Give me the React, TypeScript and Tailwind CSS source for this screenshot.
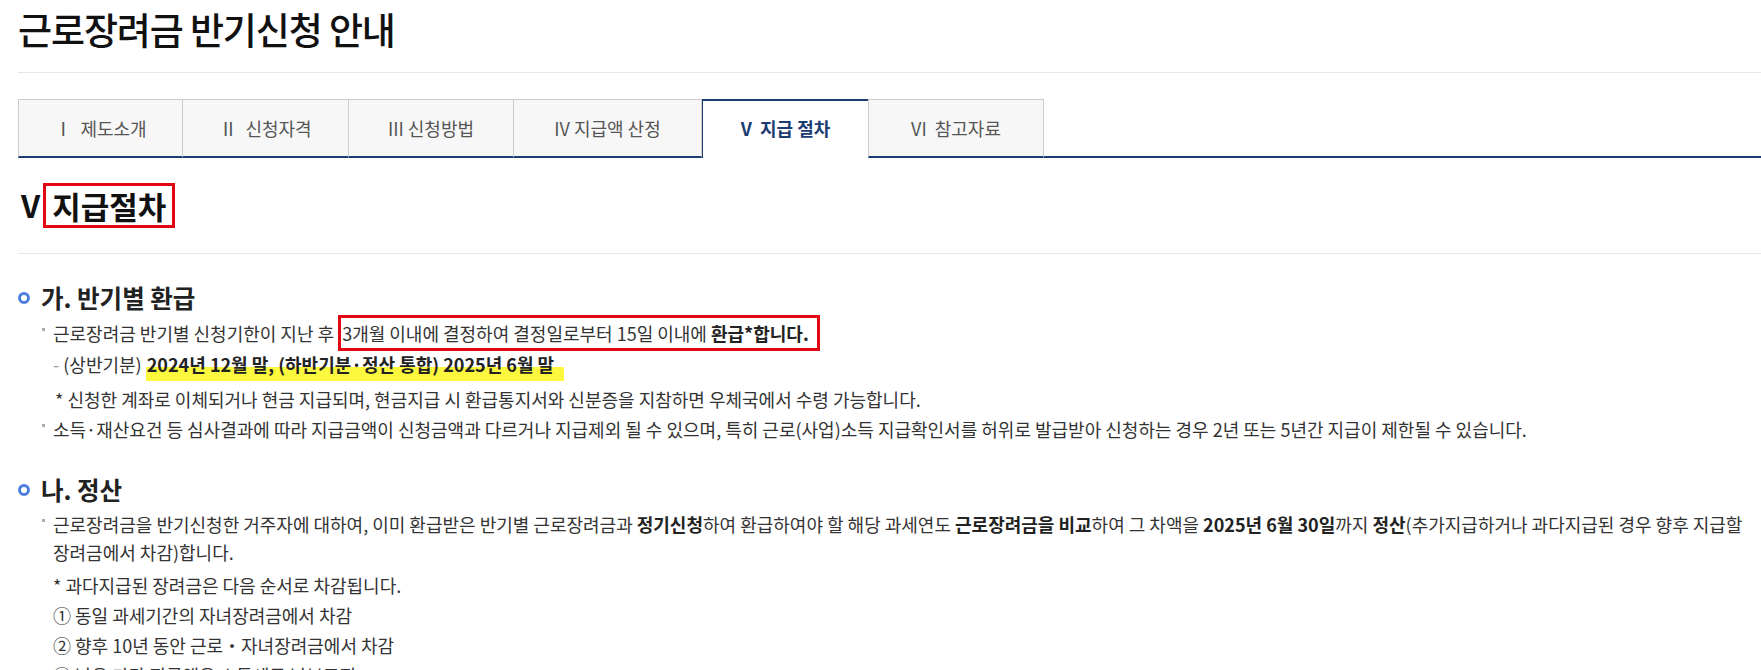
import React from "react";

const tabs = [
  { label: "Ⅰ  제도소개", width: "w-[165px]" },
  { label: "Ⅱ  신청자격", width: "w-[167px]" },
  { label: "III 신청방법", width: "w-[166px]" },
  { label: "IV 지급액 산정", width: "w-[189px]" },
  { label: "V  지급 절차", width: "w-[167px]", active: true },
  { label: "VI  참고자료", width: "w-[176px]" },
];

function Dot() {
  return <span className="mr-[8px] inline-block h-[3px] w-[3px] translate-y-[-7px] bg-[#aaa] align-middle" />;
}

function SectionTitle({ children }: Readonly<{ children: React.ReactNode }>) {
  return (
    <h3 className="flex items-center text-[24.5px] font-bold leading-[32px] text-[#222]">
      <span className="mr-[11px] inline-block h-[12px] w-[12px] rounded-full border-[3px] border-[#4a80dc]" />
      {children}
    </h3>
  );
}

export default function App() {
  return (
    <div className="min-h-screen overflow-hidden whitespace-nowrap bg-white pl-[18px] font-['Noto_Sans_CJK_KR','Noto_Sans',sans-serif] text-[#333]">
      <div className="h-[73px] border-b border-[#e6e6e6] pt-[7px]">
        <h1 className="text-[37px] font-medium leading-[44px] tracking-[-1.1px] text-[#111]">근로장려금 반기신청 안내</h1>
      </div>

      <nav className="mt-[26px] flex h-[59px]">
        {tabs.map((tab) =>
          tab.active ? (
            <div
              key={tab.label}
              className={`${tab.width} flex items-center justify-center whitespace-pre border-x border-t-2 border-[#1c3d72] bg-white pb-[2px] text-[18px] font-bold text-[#1c3d72]`}
            >
              {tab.label}
            </div>
          ) : (
            <div
              key={tab.label}
              className={`${tab.width} -ml-px flex items-center justify-center whitespace-pre border-x border-t border-[#cccccc] border-b-2 border-b-[#1c3d72] bg-[#f7f7f7] text-[18px] text-[#555] first:ml-0`}
            >
              {tab.label}
            </div>
          )
        )}
        <div className="flex-1 border-b-2 border-[#1c3d72]" />
      </nav>

      <div className="flex h-[96px] items-center border-b border-[#e6e6e6]">
        <h2 className="flex items-center text-[31px] font-bold text-[#111]">
          <span className="ml-[3px] mr-[3px]">V</span>
          <span className="border-[3px] border-[#e30613] px-[6px] leading-[39px]">지급절차</span>
        </h2>
      </div>

      <div className="mt-[28px]">
        <SectionTitle>가. 반기별 환급</SectionTitle>
        <div className="ml-[24px] mt-[4px] text-[18px] leading-[30px]">
          <p>
            <Dot />
            근로장려금 반기별 신청기한이 지난 후{" "}
            <span className="border-[3px] border-[#e30613] py-[2px] pl-[1px] pr-[8px]">
              3개월 이내에 결정하여 결정일로부터 15일 이내에 <b className="text-[#222]">환급*합니다.</b>
            </span>
          </p>
          <p className="mt-[1px] pl-[11px]">
            <span className="text-[#999]">-</span> (상반기분){" "}
            <b className="bg-[linear-gradient(transparent_52%,#fcf83e_52%)] pb-[4px] pl-[1px] pr-[10px] text-[#222]">
              2024년 12월 말, (하반기분·정산 통합) 2025년 6월 말
            </b>
          </p>
          <p className="mt-[5px] pl-[13px]">* 신청한 계좌로 이체되거나 현금 지급되며, 현금지급 시 환급통지서와 신분증을 지참하면 우체국에서 수령 가능합니다.</p>
          <p>
            <Dot />
            소득·재산요건 등 심사결과에 따라 지급금액이 신청금액과 다르거나 지급제외 될 수 있으며, 특히 근로(사업)소득 지급확인서를 허위로 발급받아 신청하는 경우 2년 또는 5년간 지급이 제한될 수 있습니다.
          </p>
        </div>
      </div>

      <div className="mt-[30px]">
        <SectionTitle>나. 정산</SectionTitle>
        <div className="ml-[24px] mt-[4px] text-[18px] leading-[30px]">
          <p className="leading-[28px]">
            <Dot />
            근로장려금을 반기신청한 거주자에 대하여, 이미 환급받은 반기별 근로장려금과 <b className="text-[#222]">정기신청</b>하여 환급하여야 할 해당 과세연도{" "}
            <b className="text-[#222]">근로장려금을 비교</b>하여 그 차액을 <b className="text-[#222]">2025년 6월 30일</b>까지{" "}
            <b className="text-[#222]">정산</b>(추가지급하거나 과다지급된 경우 향후 지급할
            <br />
            <span className="pl-[11px]">장려금에서 차감)합니다.</span>
          </p>
          <div className="pl-[11px]">
            <p className="mt-[4px]">* 과다지급된 장려금은 다음 순서로 차감됩니다.</p>
            <p>① 동일 과세기간의 자녀장려금에서 차감</p>
            <p>② 향후 10년 동안 근로・자녀장려금에서 차감</p>
            <p>③ 남은 과다 지급액은 소득세로 납부고지</p>
          </div>
        </div>
      </div>
    </div>
  );
}
